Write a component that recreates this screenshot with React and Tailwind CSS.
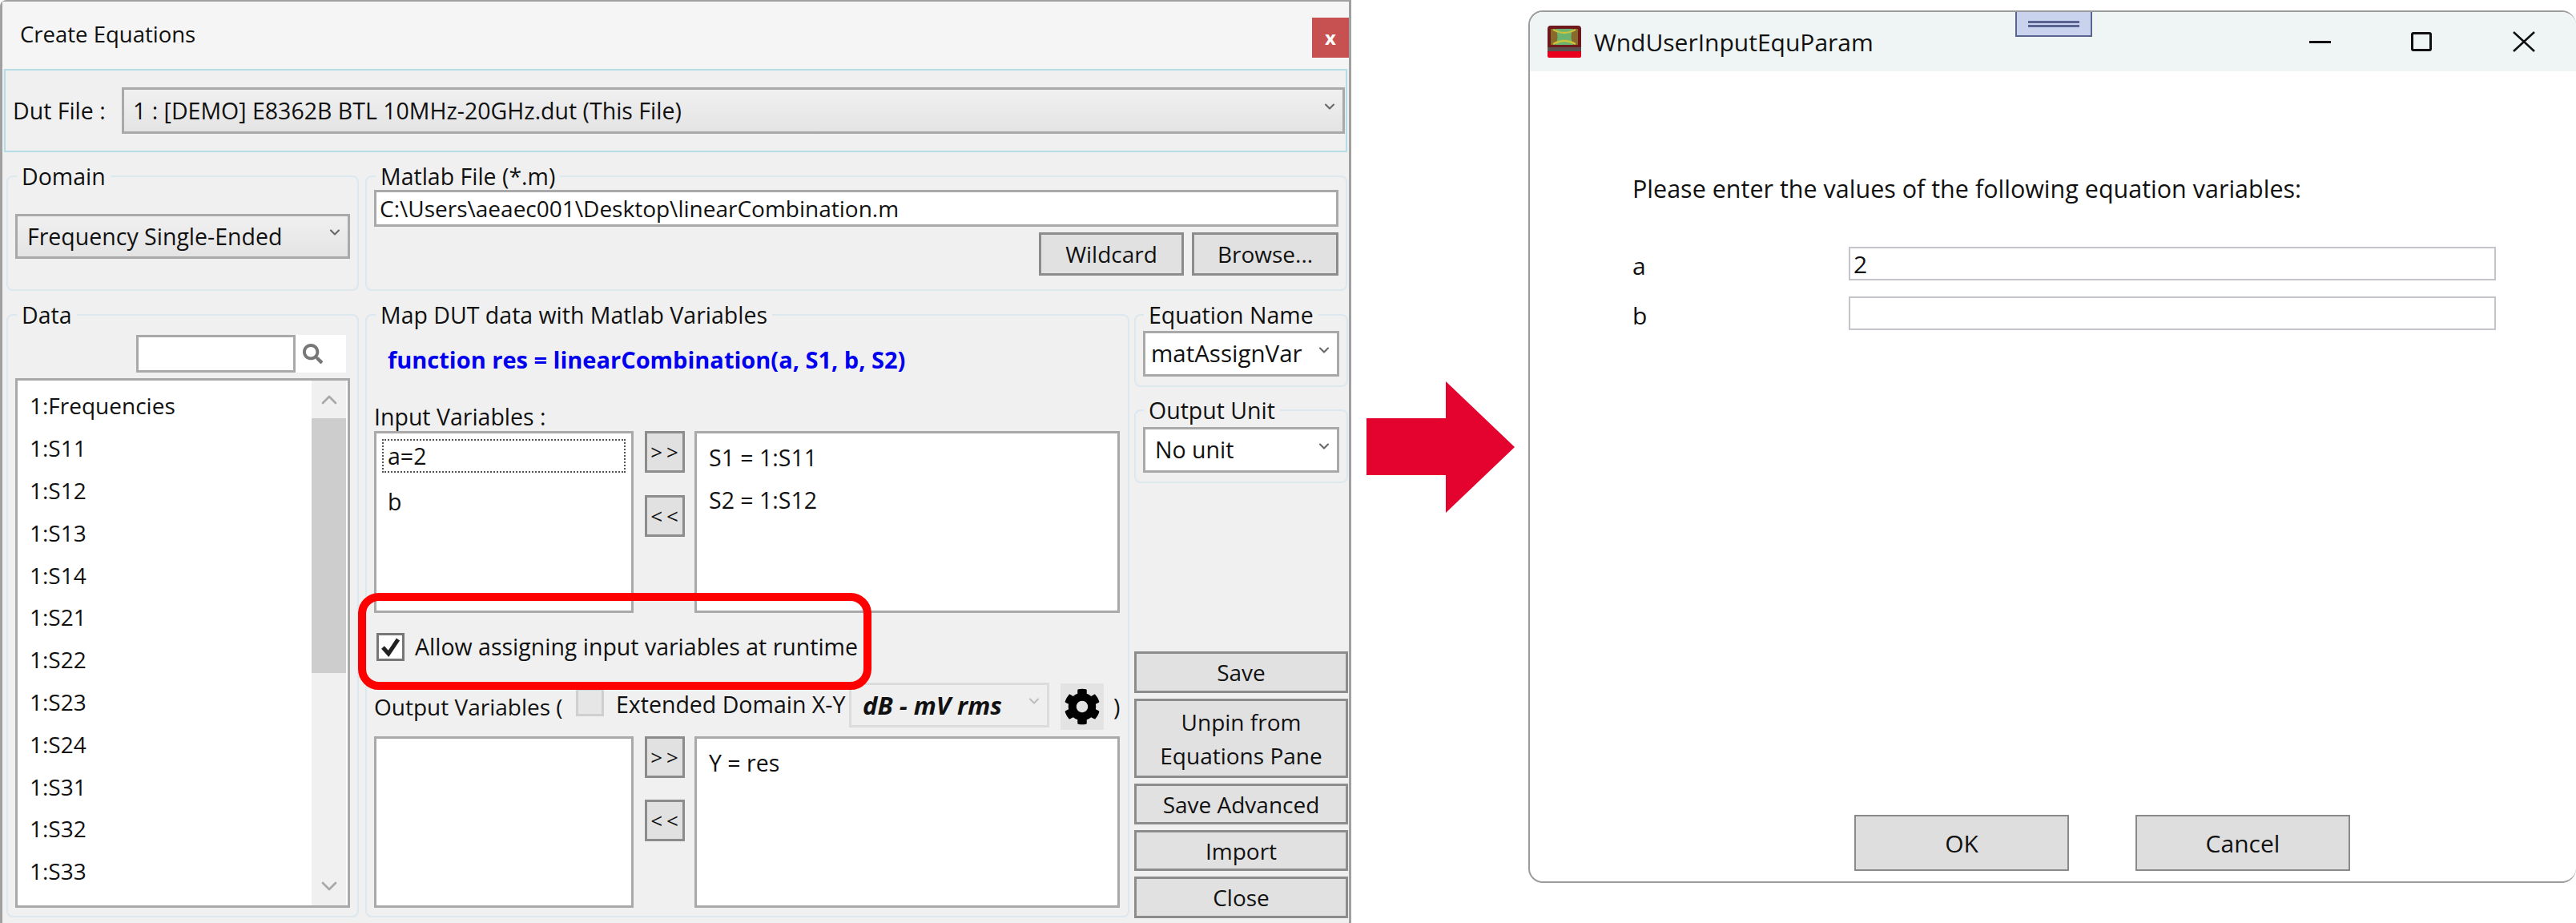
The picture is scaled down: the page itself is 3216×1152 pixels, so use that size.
import React from 'react';
import { ChevronDown, ChevronUp } from 'lucide-react';
import { FaCog, FaSearch } from 'react-icons/fa';

const dataRows = ['1:Frequencies', '1:S11', '1:S12', '1:S13', '1:S14', '1:S21', '1:S22', '1:S23', '1:S24', '1:S31', '1:S32', '1:S33'];

const Group = ({ title, className, children, legend = 'ml-[2px]' }) => (
  <fieldset className={`border-2 border-[#dde7ee] rounded-lg px-[9px] min-w-0 ${className}`}>
    <legend className={`${legend} px-[6px] h-[36px] leading-[36px]`}>{title}</legend>
    {children}
  </fieldset>
);

const Combo = ({ children, className, chevron = 'text-[#666]' }) => (
  <div className={`flex items-center justify-between border-[3px] border-[#a9a9a9] ${className}`}>
    {children}
    <ChevronDown size={20} strokeWidth={2.5} className={`mr-[6px] -mt-[10px] shrink-0 ${chevron}`} />
  </div>
);

const Btn = ({ children, className }) => (
  <button className={`flex items-center justify-center text-center leading-[42px] text-[28px] bg-[#e1e1e1] border-[3px] border-[#8c8c8c] ${className}`}>{children}</button>
);

const MoveButtons = ({ gapClass }) => (
  <div className={`flex flex-col w-[50px] shrink-0 ${gapClass}`}>
    <button className="h-[52px] bg-[#e1e1e1] border-[3px] border-[#8c8c8c] text-[26px] tracking-[5px] pl-[4px]">&gt;&gt;</button>
    <button className="h-[52px] bg-[#e1e1e1] border-[3px] border-[#8c8c8c] text-[26px] tracking-[5px] pl-[4px]">&lt;&lt;</button>
  </div>
);

const CreateEquations = () => (
  <div className="relative w-[1687px] h-[1152px] shrink-0 flex flex-col bg-[#f0f0f0] border-l-[3px] border-t-[2px] border-r-[3px] border-[#a0a0a0] rounded-tl-lg text-[28.5px] text-[#111]">
    {/* Title bar */}
    <div className="h-[84px] flex items-start justify-between bg-[#f4f5f4] shrink-0">
      <span className="ml-[22px] mt-[21px] leading-[40px] text-[27.5px]">Create Equations</span>
      <div className="mt-[20px] w-[46px] h-[50px] flex items-center justify-center bg-[#c75050] text-white font-bold text-[24px]">x</div>
    </div>

    {/* Dut file */}
    <div className="ml-[2px] w-[1677px] h-[104px] flex items-center shrink-0 border-2 border-[#b5dde8]">
      <span className="ml-[9px] w-[136px]">Dut File :</span>
      <Combo className="w-[1527px] h-[58px] pl-[11px] bg-linear-to-b from-[#f0f0f0] to-[#e4e4e4]">
        1 : [DEMO] E8362B BTL 10MHz-20GHz.dut (This File)
      </Combo>
    </div>

    {/* Domain + Matlab file */}
    <div className="flex gap-[8px] ml-[5px] mt-[12px] shrink-0">
      <Group title="Domain" className="w-[440px] h-[161px]">
        <Combo className="mt-[29px] h-[56px] pl-[12px] bg-linear-to-b from-[#f0f0f0] to-[#e4e4e4]">Frequency Single-Ended</Combo>
      </Group>
      <Group title="Matlab File (*.m)" className="w-[1226px] h-[161px]">
        <div className="h-[46px] -mt-[1px] pl-[4px] flex items-center bg-white border-[3px] border-[#a9a9a9] text-[28px]">C:\Users\aeaec001\Desktop\linearCombination.m</div>
        <div className="flex justify-end gap-[10px] mt-[7px]">
          <Btn className="w-[181px] h-[54px]">Wildcard</Btn>
          <Btn className="w-[183px] h-[54px]">Browse...</Btn>
        </div>
      </Group>
    </div>

    {/* Main area */}
    <div className="flex ml-[5px] mt-[12px]">
      <Group title="Data" className="w-[440px] h-[770px] mr-[8px]">
        <div className="flex justify-end h-[47px] mt-[7px] mr-[5px]">
          <div className="w-[199px] bg-white border-[3px] border-[#a9a9a9]" />
          <div className="w-[63px] bg-white flex items-center pl-[9px] text-[#777]"><FaSearch size={25} /></div>
        </div>
        <div className="flex h-[661px] mt-[7px] bg-white border-[3px] border-[#a9a9a9]">
          <div className="flex-1 pl-[15px] pt-[5px] text-[28px]">
            {dataRows.map(row => (
              <div key={row} className="h-[52.8px] flex items-center">{row}</div>
            ))}
          </div>
          <div className="w-[43px] mr-[2px] flex flex-col bg-[#f0f0f0] text-[#a8a8a8]">
            <div className="h-[47px] flex items-center justify-center"><ChevronUp size={32} strokeWidth={2} /></div>
            <div className="h-[318px] bg-[#cdcdcd]" />
            <div className="flex-1 flex items-end justify-center pb-[8px]"><ChevronDown size={32} strokeWidth={2} /></div>
          </div>
        </div>
      </Group>

      <Group title="Map DUT data with Matlab Variables" className="w-[954px] h-[770px] shrink-0">
        <div className="h-[76px] pl-[17px] flex items-center font-bold text-[#0000ee] text-[29px]">function res = linearCombination(a, S1, b, S2)</div>
        <div className="h-[36px] mt-[15px] leading-[36px]">Input Variables :</div>
        <div className="flex h-[227px]">
          <div className="w-[324px] shrink-0 bg-white border-[3px] border-[#a9a9a9] p-[7px]">
            <div className="h-[42px] pl-[5px] flex items-center border-2 border-dotted border-[#555]">a=2</div>
            <div className="mt-[14px] pl-[7px] leading-[44px]">b</div>
          </div>
          <div className="ml-[14px] mr-[12px]"><MoveButtons gapClass="gap-[28px]" /></div>
          <div className="w-[531px] shrink-0 bg-white border-[3px] border-[#a9a9a9] pl-[15px] pt-[4px] leading-[53px]">
            <div>S1 = 1:S11</div>
            <div>S2 = 1:S12</div>
          </div>
        </div>

        <div className="flex items-center mt-[25px] h-[35px]">
          <div className="w-[35px] h-[35px] ml-[3px] bg-white border-[3px] border-[#777] flex items-center justify-center">
            <svg width="26" height="26" viewBox="0 0 26 26" fill="none" stroke="#222" strokeWidth="5"><path d="M3 13 L10 21 L22 3" /></svg>
          </div>
          <span className="ml-[13px]">Allow assigning input variables at runtime</span>
        </div>

        <div className="flex items-center h-[60px] mt-[27px]">
          <span className="w-[252px] shrink-0 text-[28px]">Output Variables (</span>
          <div className="w-[35px] h-[35px] -mt-[12px] bg-[#e6e6e6] border-[3px] border-[#cfcfcf] shrink-0" />
          <span className="ml-[15px] w-[291px] shrink-0 -mt-[6px] whitespace-nowrap">Extended Domain X-Y</span>
          <Combo className="w-[250px] h-[56px] pl-[14px] -mt-[4px] border-[#dcdcdc]! bg-[#efefef] font-bold italic shrink-0 text-[31px] whitespace-nowrap" chevron="text-[#bdbdbd]">dB - mV rms</Combo>
          <div className="w-[54px] h-[58px] ml-[14px] bg-[#e3e3e3] flex items-center justify-center text-black shrink-0"><FaCog size={46} /></div>
          <span className="ml-[12px]">)</span>
        </div>

        <div className="flex h-[214px] mt-[7px]">
          <div className="w-[324px] shrink-0 bg-white border-[3px] border-[#a9a9a9]" />
          <div className="ml-[14px] mr-[12px]"><MoveButtons gapClass="gap-[27px]" /></div>
          <div className="w-[531px] shrink-0 bg-white border-[3px] border-[#a9a9a9] pl-[15px] pt-[4px] leading-[53px]">Y = res</div>
        </div>
      </Group>

      <div className="w-[267px] h-[771px] ml-[6px] flex flex-col">
        <Group title="Equation Name" legend="ml-[1px]" className="h-[108px]">
          <Combo className="h-[57px] mt-[2px] pl-[7px] bg-white text-[29.5px]">matAssignVar</Combo>
        </Group>
        <Group title="Output Unit" legend="ml-[1px]" className="h-[109px] mt-[11px]">
          <Combo className="h-[57px] mt-[3px] pl-[12px] bg-white">No unit</Combo>
        </Group>
        <div className="flex flex-col gap-[7px] mt-auto">
          <Btn className="h-[52px]">Save</Btn>
          <Btn className="h-[99px]">Unpin from<br />Equations Pane</Btn>
          <Btn className="h-[51px]">Save Advanced</Btn>
          <Btn className="h-[51px]">Import</Btn>
          <Btn className="h-[52px]">Close</Btn>
        </div>
      </div>
    </div>

    {/* Red callout */}
    <div className="absolute left-[444px] top-[738px] w-[641px] h-[121px] border-[10px] border-[#ff0000] rounded-[26px]" />
  </div>
);

const AppIcon = () => (
  <svg width="42" height="40" viewBox="0 0 42 40" className="shrink-0">
    <rect width="42" height="40" rx="4" fill="#6e1a1c" />
    <path d="M9 4 H33 Q28 14 33 24 H9 Q14 14 9 4 Z" fill="#6cb36f" />
    <path d="M4 4 H10 Q15 14 10 24 H4 Z M38 4 H32 Q27 14 32 24 H38 Z" fill="#8a6a2a" />
    <path d="M7 5 Q15 9 21 9 Q27 9 35 5 M7 23 Q15 19 21 19 Q27 19 35 23" fill="none" stroke="#c9c23a" strokeWidth="2.5" />
    <rect y="27" width="42" height="5" fill="#5a5050" />
    <rect y="32" width="42" height="8" rx="2" fill="#e8001c" />
  </svg>
);

const UserInputWindow = () => (
  <div className="relative w-[1308px] h-[1089px] mt-[13px] ml-[17px] shrink-0 flex flex-col bg-white border-l-2 border-t-2 border-b-2 border-[#9c9c9c] rounded-[18px] overflow-hidden text-[30px] text-[#111]">
    <div className="h-[74px] flex items-center bg-[#eff4f4] shrink-0">
      <div className="ml-[22px]"><AppIcon /></div>
      <span className="ml-[16px] text-[30px]">WndUserInputEquParam</span>
      <div className="ml-auto flex items-center">
        <div className="w-[27px] h-[3px] bg-[#111]" />
        <div className="ml-[100px] w-[26px] h-[24px] border-[3px] border-[#111] rounded-[3px]" />
        <svg width="28" height="26" viewBox="0 0 28 26" className="ml-[101px] mr-[51px]" stroke="#111" strokeWidth="2.5"><path d="M1 1 L27 25 M27 1 L1 25" /></svg>
      </div>
    </div>

    {/* Dock handle from the window behind */}
    <div className="absolute left-[606px] top-0 w-[96px] h-[31px] bg-[#c9d3ee] border-2 border-t-0 border-[#5a6490] flex flex-col items-center justify-center gap-[2px]">
      <div className="w-[64px] h-[3px] bg-[#5a6490]" />
      <div className="w-[64px] h-[3px] bg-[#5a6490]" />
    </div>

    <div className="flex-1 flex flex-col pl-[128px]">
      <div className="mt-[128px] leading-[36px] text-[30.5px] whitespace-nowrap">Please enter the values of the following equation variables:</div>
      <div className="mt-[55px] flex flex-col gap-[20px]">
        <div className="flex items-center h-[42px]">
          <span className="w-[270px] mt-[4px]">a</span>
          <div className="w-[808px] h-[42px] pl-[4px] flex items-center border-2 border-[#c3c3c9]">2</div>
        </div>
        <div className="flex items-center h-[42px]">
          <span className="w-[270px] mt-[4px]">b</span>
          <div className="w-[808px] h-[42px] border-2 border-[#c3c3c9]" />
        </div>
      </div>
      <div className="mt-auto mb-[13px] ml-[277px] flex gap-[83px]">
        <button className="w-[268px] h-[70px] bg-[#dedede] border-2 border-[#8a8a8a]">OK</button>
        <button className="w-[268px] h-[70px] bg-[#dedede] border-2 border-[#8a8a8a]">Cancel</button>
      </div>
    </div>
  </div>
);

export default function App() {
  return (
    <div className="w-[3216px] h-[1152px] flex items-start bg-white overflow-hidden font-['Open_Sans',sans-serif]">
      <CreateEquations />
      <svg width="185" height="164" viewBox="0 0 185 164" className="ml-[19px] mt-[476px] shrink-0">
        <polygon points="0,46 99,46 99,0 185,82 99,164 99,117 0,117" fill="#e4032e" />
      </svg>
      <UserInputWindow />
    </div>
  );
}
